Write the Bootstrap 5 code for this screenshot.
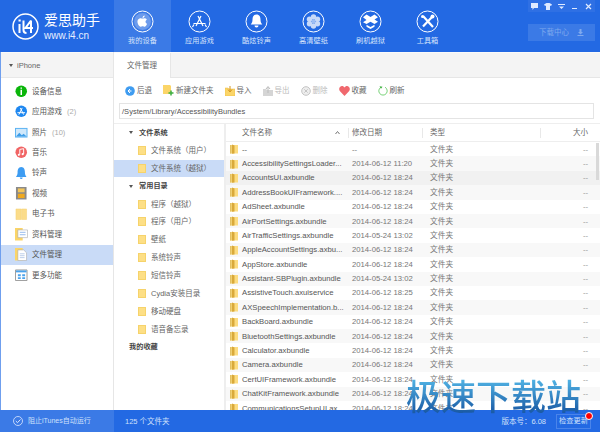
<!DOCTYPE html>
<html lang="zh"><head><meta charset="utf-8"><title>爱思助手</title>
<link href="https://cdn.jsdelivr.net/npm/bootstrap@5.3.0/dist/css/bootstrap.min.css" rel="stylesheet">
<style>
html,body{width:600px;height:432px;overflow:hidden;margin:0;background:#fff}
body{font-family:"Liberation Sans","Noto Sans CJK SC",sans-serif;font-size:8px;color:#555;line-height:1.2;position:relative}
.app{width:600px;height:432px}
.top{height:52px;background:#2369e3;color:#e6efff}
.logo{width:114px;padding-left:12px;gap:5px}
.logo-t{font-size:14px;line-height:16px;color:#fff}
.logo-u{font-size:10px;line-height:11px;color:#e6efff;margin-top:2px}
.tab-i{width:57px;height:52px;padding-top:10px}
.tab-i.on{background:#3b7ae6}
.tab-i span{font-size:7.2px;margin-top:4px;color:#d5e3fb}
.winbtns{right:5px;top:0;height:12px;background:#2f70e4}
.winbtns>i{width:13.4px;height:12px}
.dl{right:5px;top:24px;width:67px;height:17px;background:#3b7ae6;color:#7fa9ee;font-size:7.5px}
.body-w{height:358px}
.side{width:114px;border-left:1px solid #6f9fee;border-right:1px solid #e6e6e6}
.phone{height:26px;background:#f4f4f4;border-bottom:1px solid #e8e8e8;border-top:1px solid #fafafa;padding-left:8px;font-size:7.5px;color:#666;gap:4px}
.tri{width:0;height:0;border-left:2.5px solid transparent;border-right:2.5px solid transparent;border-top:3.5px solid #555}
.side-list{padding-top:3px}
.s-i{height:20.44px;padding-left:14px;font-size:7.5px;color:#555}
.s-i.on{background:#c9dbf7}
.s-i em{font-style:normal;color:#aaa;margin-left:5px}
.ic{width:12.5px;height:12.5px;margin-right:4.5px;flex:none}
.main{width:486px}
.tabbar{height:26px;background:#f4f4f4;border-bottom:1px solid #e6e6e6;border-top:1px solid #fafafa}
.tabcur{width:57px;height:25px;background:#fff;border-right:1px solid #e6e6e6;font-size:7.5px;color:#666}
.tools{height:25px;padding-left:11px;gap:11px;font-size:7.5px;color:#666}
.tools svg{margin-right:2px}
.off{color:#bbb}
.path{height:16px;margin:0 6px 0 5px;border:1px solid #e4e4e4;font-size:7.5px;color:#555;padding-left:2px;letter-spacing:.03px}
.split{height:287px;margin-top:4px;border-top:1px solid #eee}
.tree{width:112px;border-right:2px solid #eee;flex:none}
.t-h{height:17.7px;padding-left:15px;font-size:7.2px;font-weight:700;color:#444}
.t-h .tri{margin-right:6px}
.t-i{height:17.9px;padding-left:24px;font-size:7.5px;color:#666}
.t-i.on{background:#c9dbf7}
.fld{width:8px;height:9px;background:#fddf86;border:1px solid #f6d36b;margin-right:5px}
.list{flex:1;overflow:hidden;position:relative}
.hd{height:18px;border-bottom:1px solid #eee;color:#666;font-size:7.5px}
.hd>div{height:10px}
.c1{width:123px;padding-left:4px;flex:none}
.c2{width:74px;padding-left:3px;flex:none}
.c3{width:118px;padding-left:7px;flex:none}
.c4{width:59px;text-align:right;flex:none;padding-right:12px}
.hd .c1,.hd .c2,.hd .c3{border-right:1px solid #e8e8e8}
.hd .c1{padding-left:16px}
.rw{height:14.4px;color:#777;font-size:7.7px;white-space:nowrap}
.rw:nth-child(even){background:#f8f8f8}
.rw.hv{background:#f1f1f1}
.rw .c1{padding-left:3px;color:#555;overflow:hidden}
.rw .c4{color:#999}
.fd{width:9px;height:10px;margin-right:4px;flex:none}
.sb{position:absolute;right:1px;top:19px;width:3px;height:37px;background:#d9d9d9}
.bot{height:22px;background:#2369e3;color:#cfe0fb;font-size:7.5px}
.bot-l{width:114px;background:#3b7ae6;padding-left:13px;font-size:7px}
.bot-l svg{margin-right:5px}
.bot-m{padding-left:11px;flex:1}
.upd{width:35px;height:15px;border:1px solid #4a84ea;margin:0 9px 0 10px;position:relative;font-size:7.2px}
.dot{position:absolute;right:-3px;top:-3px;width:6px;height:6px;border-radius:50%;background:#f00;border:1px solid #fff;box-sizing:content-box}
.wm{position:absolute;left:406px;top:371px;font-size:35px;line-height:48px;font-weight:500;white-space:nowrap;font-family:"Noto Sans CJK SC",sans-serif;background:linear-gradient(#4fb0e2 20%,#1b5ca6 85%);-webkit-background-clip:text;background-clip:text;color:transparent}
</style></head><body>
<svg width="0" height="0" class="position-absolute"><defs>
<symbol id="fold" viewBox="0 0 9 10"><path d="M1 1h8v8.500H1z" fill="#fcdc80"/><path d="M1 1h1.500v8.500H1z" fill="#e3c163"/><path d="M3 .5l2.500 1v8L3 9.800z" fill="#d9a93a"/></symbol>
</defs></svg>
<div class="app d-flex flex-column">
<div class="top d-flex position-relative">
  <div class="logo d-flex align-items-center">
    <svg width="27" height="27" viewBox="0 0 27 27" class="flex-none"><circle cx="13.500" cy="13.500" r="12.500" fill="none" stroke="#fff" stroke-width="1.500"/><path d="M7.500 11v9M6.500 7.500h2.200M11.500 7.500v9.500q0 3 3 3M19 7.500l-5.500 7.500h7.500M19 7.500v12.500" fill="none" stroke="#fff" stroke-width="2"/></svg>
    <div><div class="logo-t">爱思助手</div><div class="logo-u">www.i4.cn</div></div>
  </div>
  <div class="tab-i on d-flex flex-column align-items-center">
    <svg width="23" height="23" viewBox="0 0 23 23"><circle cx="11.500" cy="11.500" r="10.500" fill="none" stroke="#fff"/><circle cx="11.500" cy="11.500" r="8.500" fill="#fff" opacity=".25"/><path d="M8.500 8.500c1.500-.7 2.300 0 3 0s1.700-.8 3.200 0c.6.3 1 .8 1.100 1.200-1.900 1-1.500 3.300.3 4-.5 1.300-1.500 3-2.500 3-.8 0-1.100-.5-2-.5s-1.300.5-2 .5c-1.500 0-3.500-3.500-3.100-5.700.1-1 .9-2 2-2.500zM11.500 8c0-1.200.9-2.300 2.200-2.500.1 1.300-1 2.500-2.200 2.500z" fill="#fff"/></svg>
    <span>我的设备</span></div>
  <div class="tab-i d-flex flex-column align-items-center">
    <svg width="23" height="23" viewBox="0 0 23 23"><circle cx="11.500" cy="11.500" r="10.500" fill="none" stroke="#fff"/><path d="M8 16l5-10M15 16L10 6M5.500 13.500h12M4.500 17l1.500-2.500M18.500 17L17 14.500" stroke="#fff" stroke-width="1.200" fill="none"/></svg>
    <span>应用游戏</span></div>
  <div class="tab-i d-flex flex-column align-items-center">
    <svg width="23" height="23" viewBox="0 0 23 23"><circle cx="11.500" cy="11.500" r="10.500" fill="none" stroke="#fff"/><path d="M11.500 4.500c3 0 4 2.500 4 5 0 2.500.7 3.700 1.800 5H5.700c1.100-1.300 1.800-2.500 1.800-5 0-2.500 1-5 4-5zM9.500 15.500h4a2 2 0 0 1-4 0z" fill="#fff"/></svg>
    <span>酷炫铃声</span></div>
  <div class="tab-i d-flex flex-column align-items-center">
    <svg width="23" height="23" viewBox="0 0 23 23"><circle cx="11.500" cy="11.500" r="10.500" fill="none" stroke="#fff"/><g fill="#fff" opacity=".75"><circle cx="11.500" cy="7" r="2.700"/><circle cx="11.500" cy="16" r="2.700"/><circle cx="7.500" cy="9.200" r="2.700"/><circle cx="15.500" cy="9.200" r="2.700"/><circle cx="7.500" cy="13.800" r="2.700"/><circle cx="15.500" cy="13.800" r="2.700"/></g><circle cx="11.500" cy="11.500" r="2" fill="#9dbdf3"/></svg>
    <span>高清壁纸</span></div>
  <div class="tab-i d-flex flex-column align-items-center">
    <svg width="23" height="23" viewBox="0 0 23 23"><circle cx="11.500" cy="11.500" r="10.500" fill="none" stroke="#fff"/><path d="M7.500 4.500l4 2.500 4-2.500 3.500 2.700-3.500 2.300 3.500 2.300-3.500 2.200-4-2.300-4 2.300L4 12.300l3.500-2.300L4 7.200zM7.500 14.800l4 2.200 4-2.200v2l-4 2.200-4-2.200z" fill="#fff"/></svg>
    <span>刷机越狱</span></div>
  <div class="tab-i d-flex flex-column align-items-center">
    <svg width="23" height="23" viewBox="0 0 23 23"><circle cx="11.500" cy="11.500" r="10.500" fill="none" stroke="#fff"/><path d="M7 6l10 11M16.500 6.500l-9.500 10" stroke="#fff" stroke-width="2.200" fill="none"/><circle cx="16.500" cy="6.500" r="2" fill="#fff"/><circle cx="6.500" cy="6.500" r="1.500" fill="#fff"/></svg>
    <span>工具箱</span></div>
  <div class="winbtns position-absolute d-flex">
    <i class="d-flex align-items-center justify-content-center"><svg width="7" height="7" viewBox="0 0 7 7"><path d="M0 0h7v5H3L1.500 7V5H0z" fill="#dfeaff"/></svg></i>
    <i class="d-flex align-items-center justify-content-center"><svg width="8" height="7" viewBox="0 0 8 7"><path d="M2.500 0L0 1.500 1 3l1-.5V7h4V2.500l1 .5 1-1.500L5.500 0h-3z" fill="#dfeaff"/></svg></i>
    <i class="d-flex align-items-center justify-content-center"><svg width="7" height="7" viewBox="0 0 7 7"><path d="M0 1h7v1H0zM1 3.500h5L3.500 6z" fill="#dfeaff"/></svg></i>
    <i class="d-flex align-items-center justify-content-center"><svg width="7" height="7" viewBox="0 0 7 7"><path d="M1 5h5v1H1z" fill="#dfeaff"/></svg></i>
    <i class="d-flex align-items-center justify-content-center"><svg width="7" height="7" viewBox="0 0 7 7"><path d="M1 1l5 5M6 1L1 6" stroke="#dfeaff" stroke-width="1.200"/></svg></i>
  </div>
  <div class="dl position-absolute d-flex align-items-center justify-content-center gap-2"><span>下载中心</span><svg width="7" height="7" viewBox="0 0 7 7"><path d="M2.500 0h2v3H6L3.500 5.500 1 3h1.500zM.5 6h6v1h-6z" fill="#7fa9ee"/></svg></div>
</div>
<div class="body-w d-flex">
  <div class="side flex-none">
    <div class="phone d-flex align-items-center"><i class="tri"></i><span>iPhone</span></div>
    <div class="side-list">
      <div class="s-i d-flex align-items-center"><svg class="ic" viewBox="0 0 13 13"><circle cx="6.500" cy="6.500" r="6" fill="#0ab50a"/><path d="M5.700 2.500h1.600v1.500H5.700zM5.700 5h1.600v5.500H5.700z" fill="#fff"/></svg>设备信息</div>
      <div class="s-i d-flex align-items-center"><svg class="ic" viewBox="0 0 13 13"><circle cx="6.500" cy="6.500" r="6" fill="#1e87f0"/><path d="M4 10l3.500-7M9 10L5.500 3M2.500 8h8" stroke="#fff" fill="none"/></svg>应用游戏<em>(2)</em></div>
      <div class="s-i d-flex align-items-center"><svg class="ic" viewBox="0 0 13 13"><path d="M0 2h13v10H0z" fill="#5ab2f2"/><path d="M1 3h11v8H1z" fill="#cfe8fb"/><path d="M1 11l3.500-4 2.500 2.500 2-1.500 3 3z" fill="#3d9de8"/></svg>照片<em>(10)</em></div>
      <div class="s-i d-flex align-items-center"><svg class="ic" viewBox="0 0 13 13"><circle cx="6.500" cy="6.500" r="6" fill="#f16464"/><path d="M5 3.500l4-.7v5.500M5 3.500V9" stroke="#fff" fill="none"/><circle cx="4" cy="9.200" r="1.100" fill="#fff"/><circle cx="8" cy="8.500" r="1.100" fill="#fff"/></svg>音乐</div>
      <div class="s-i d-flex align-items-center"><svg class="ic" viewBox="0 0 13 13"><path d="M6.500 0c3 0 3.800 3 3.800 5.500 0 2.500.7 3.700 1.700 5H1c1-1.300 1.700-2.500 1.700-5C2.700 3 3.500 0 6.500 0zM5 11h3a1.500 1.500 0 0 1-3 0z" fill="#3d9cf2"/></svg>铃声</div>
      <div class="s-i d-flex align-items-center"><svg class="ic" viewBox="0 0 13 13"><path d="M1 0h11v13H1z" fill="#8a8a8a"/><path d="M3 1.500h7v4H3z" fill="#f4c65a"/><path d="M3 7h7v4.500H3z" fill="#f0a91e"/></svg>视频</div>
      <div class="s-i d-flex align-items-center"><svg class="ic" viewBox="0 0 13 13"><path d="M1 1h5.200v11H1zM6.800 1H12v11H6.800z" fill="#fbdc8a" stroke="#f5cf6b" stroke-width=".5"/></svg>电子书</div>
      <div class="s-i d-flex align-items-center"><svg class="ic" viewBox="0 0 13 13"><path d="M0 0h8v13H0z" fill="#fbd568"/><path d="M3 2h10v8H3z" fill="#fff" stroke="#aaa" stroke-width=".6"/><path d="M5 4.500h6M5 7h6" stroke="#7aa7e8" stroke-width=".8"/></svg>资料管理</div>
      <div class="s-i on d-flex align-items-center"><svg class="ic" viewBox="0 0 13 13"><path d="M0 0h8v13H0z" fill="#fbd568"/><path d="M3 2h6l3 3v8H3z" fill="#fff" stroke="#aaa" stroke-width=".6"/><path d="M5 6h5M5 8h5M5 10h5" stroke="#9db8e0" stroke-width=".7"/></svg>文件管理</div>
      <div class="s-i d-flex align-items-center"><svg class="ic" viewBox="0 0 13 13"><path d="M.500 1h12v11H.500z" fill="#fff" stroke="#9a9a9a"/><path d="M1 1.500h11v2H1z" fill="#4ba3ec"/><path d="M3 5.500h3v2H3zM7.500 5.500h3v2h-3zM3 8.500h3v2H3zM7.500 8.500h3v2h-3z" fill="#4ba3ec"/></svg>更多功能</div>
    </div>
  </div>
  <div class="main d-flex flex-column">
    <div class="tabbar"><div class="tabcur d-flex align-items-center justify-content-center">文件管理</div></div>
    <div class="tools d-flex align-items-center">
      <div class="d-flex align-items-center"><svg width="10" height="10" viewBox="0 0 10 10"><circle cx="5" cy="5" r="4.800" fill="#3f9cf0"/><path d="M6.500 5H3.500M5 3L3 5l2 2" stroke="#fff" fill="none"/></svg>后退</div>
      <div class="d-flex align-items-center"><svg width="11" height="11" viewBox="0 0 11 11"><path d="M0 0h7l1 1v6H7v2H0z" fill="#fbd568"/><path d="M8 5.500v5M5.500 8h5" stroke="#3dae3d" stroke-width="1.500"/></svg>新建文件夹</div>
      <div class="d-flex align-items-center"><svg width="10" height="10" viewBox="0 0 10 10"><path d="M0 2h3l1 1h6v7H0z" fill="#fbd568" stroke="#e8b93f" stroke-width=".5"/><path d="M5 0v5M3 3.500L5 6l2-2.500" stroke="#d4951f" fill="none"/></svg>导入</div>
      <div class="d-flex align-items-center off"><svg width="10" height="10" viewBox="0 0 10 10"><path d="M0 3h3l1 1h6v6H0z" fill="#d5d5d5"/><path d="M5 7V1M3 3l2-2.500L7 3" stroke="#bbb" fill="none"/></svg>导出</div>
      <div class="d-flex align-items-center off"><svg width="10" height="10" viewBox="0 0 10 10"><circle cx="5" cy="5" r="4.300" fill="#eee" stroke="#c4c4c4"/><path d="M3.300 3.300l3.400 3.400M6.700 3.300L3.300 6.700" stroke="#c4c4c4"/></svg>删除</div>
      <div class="d-flex align-items-center"><svg width="11" height="10" viewBox="0 0 11 10"><path d="M5.500 10L.8 5C-.8 2.500 1 0 3 0c1.100 0 2 .6 2.500 1.500C6 .6 6.900 0 8 0c2 0 3.800 2.500 2.200 5z" fill="#f0686e"/></svg>收藏</div>
      <div class="d-flex align-items-center"><svg width="10" height="10" viewBox="0 0 10 10"><path d="M3 1.200A4.200 4.200 0 1 0 7 1.200" fill="none" stroke="#79d279" stroke-width="1"/><path d="M1.500 .2l3 .6-1.500 2z" fill="#3dae3d"/></svg>刷新</div>
    </div>
    <div class="path d-flex align-items-center">/System/Library/AccessibilityBundles</div>
    <div class="split d-flex">
      <div class="tree">
        <div class="t-h d-flex align-items-center"><i class="tri"></i>文件系统</div>
        <div class="t-i d-flex align-items-center"><i class="fld"></i>文件系统（用户）</div>
        <div class="t-i on d-flex align-items-center"><i class="fld"></i>文件系统（越狱）</div>
        <div class="t-h d-flex align-items-center"><i class="tri"></i>常用目录</div>
        <div class="t-i d-flex align-items-center"><i class="fld"></i>程序（越狱）</div>
        <div class="t-i d-flex align-items-center"><i class="fld"></i>程序（用户）</div>
        <div class="t-i d-flex align-items-center"><i class="fld"></i>壁纸</div>
        <div class="t-i d-flex align-items-center"><i class="fld"></i>系统铃声</div>
        <div class="t-i d-flex align-items-center"><i class="fld"></i>短信铃声</div>
        <div class="t-i d-flex align-items-center"><i class="fld"></i>Cydia安装目录</div>
        <div class="t-i d-flex align-items-center"><i class="fld"></i>移动硬盘</div>
        <div class="t-i d-flex align-items-center"><i class="fld"></i>语音备忘录</div>
        <div class="t-h d-flex align-items-center">我的收藏</div>
      </div>
      <div class="list">
        <div class="hd d-flex align-items-center"><div class="c1 d-flex align-items-center justify-content-between pe-2"><span>文件名称</span><svg width="5" height="3" viewBox="0 0 5 3"><path d="M.5 3L2.500.5 4.500 3" stroke="#777" fill="none"/></svg></div><div class="c2 d-flex align-items-center">修改日期</div><div class="c3 d-flex align-items-center">类型</div><div class="c4">大小</div></div>
        <div id="rows"></div>
        <div class="sb"></div>
      </div>
    </div>
  </div>
</div>
<div class="bot d-flex align-items-center">
  <div class="bot-l h-100 d-flex align-items-center"><svg width="10" height="10" viewBox="0 0 10 10"><circle cx="5" cy="5" r="4.500" fill="none" stroke="#dfeaff" stroke-width=".8"/><path d="M2.800 5l1.700 1.700 3-3.200" stroke="#dfeaff" fill="none"/></svg>阻止iTunes自动运行</div>
  <div class="bot-m">125 个文件夹</div>
  <div>版本号：6.08</div>
  <div class="upd d-flex align-items-center justify-content-center">检查更新<i class="dot"></i></div>
</div>
</div>
<div class="wm">极速下载站</div>
<script>
var d=[["--","--"],["AccessibilitySettingsLoader...","2014-06-12 11:20"],["AccountsUI.axbundle","2014-06-12 18:24"],["AddressBookUIFramework....","2014-06-12 18:24"],["AdSheet.axbundle","2014-06-12 18:24"],["AirPortSettings.axbundle","2014-06-12 18:24"],["AirTrafficSettings.axbundle","2014-05-24 13:02"],["AppleAccountSettings.axbu...","2014-06-12 18:24"],["AppStore.axbundle","2014-06-12 18:24"],["Assistant-SBPlugin.axbundle","2014-05-24 13:02"],["AssistiveTouch.axuiservice","2014-06-12 18:25"],["AXSpeechImplementation.b...","2014-06-12 18:24"],["BackBoard.axbundle","2014-06-12 18:24"],["BluetoothSettings.axbundle","2014-06-12 18:24"],["Calculator.axbundle","2014-06-12 18:24"],["Camera.axbundle","2014-06-12 18:24"],["CertUIFramework.axbundle","2014-06-12 18:24"],["ChatKitFramework.axbundle","2014-06-12 18:24"],["CommunicationsSetupUI.ax...","2014-06-12 18:24"]];
document.getElementById('rows').innerHTML=d.map(function(r,i){return '<div class="rw d-flex align-items-center'+(i==2?' hv':'')+'"><div class="c1 d-flex align-items-center"><svg class="fd"><use href="#fold"/></svg><span>'+r[0]+'</span></div><div class="c2">'+r[1]+'</div><div class="c3">文件夹</div><div class="c4">--</div></div>'}).join('');
</script>
</body></html>
